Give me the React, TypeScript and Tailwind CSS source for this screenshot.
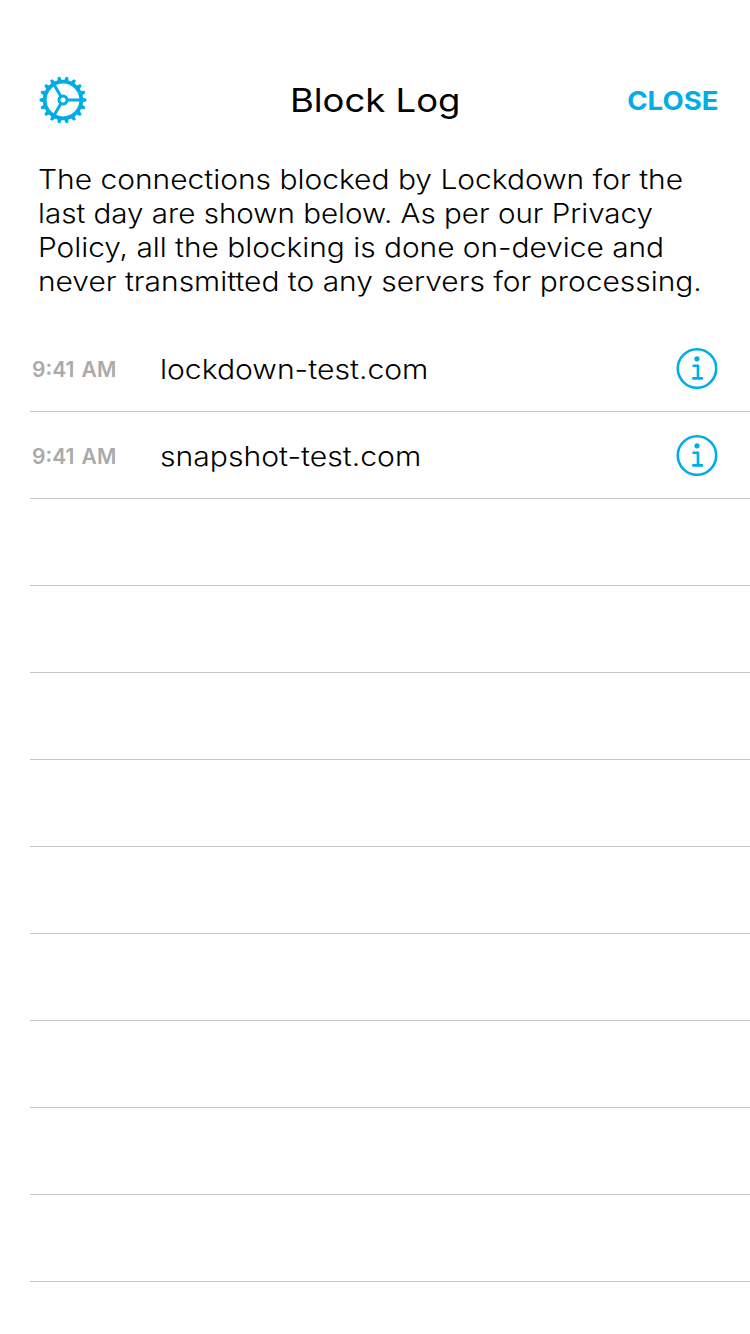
const intro = [
  { text: 'The connections blocked by Lockdown for the', stretch: 'scale-x-[1.109]' },
  { text: 'last day are shown below. As per our Privacy', stretch: 'scale-x-[1.095]' },
  { text: 'Policy, all the blocking is done on-device and', stretch: 'scale-x-[1.105]' },
  { text: 'never transmitted to any servers for processing.', stretch: 'scale-x-[1.108]' },
];

const entries = [
  { time: '9:41 AM', domain: 'lockdown-test.com' },
  { time: '9:41 AM', domain: 'snapshot-test.com' },
];

const EMPTY_ROWS = 9;
const TEETH = 18;

function GearIcon() {
  return (
    <svg viewBox="0 0 48 48" className="size-12" fill="none" stroke="currentColor">
      <circle cx="24" cy="24" r="18.3" strokeWidth="3.8" />
      <circle cx="24" cy="24" r="4" strokeWidth="3" />
      {Array.from({ length: TEETH }, (_, i) => (
        <path
          key={i}
          d="M43 21.6L47.4 22.8V25.2L43 26.4Z"
          fill="currentColor"
          stroke="none"
          transform={`rotate(${(i * 360) / TEETH} 24 24)`}
        />
      ))}
      {[0, 120, 240].map((angle) => (
        <path key={angle} d="M29 24H42" strokeWidth="3" transform={`rotate(${angle} 24 24)`} />
      ))}
    </svg>
  );
}

function InfoIcon() {
  return (
    <svg
      viewBox="0 0 42 42"
      className="size-[42px]"
      fill="none"
      stroke="currentColor"
      strokeWidth="2.6"
      strokeLinecap="round"
      strokeLinejoin="round"
    >
      <circle cx="21" cy="20.5" r="19.2" />
      <circle cx="21" cy="10.8" r="2.6" fill="currentColor" stroke="none" />
      <path d="M17.6 17.7H22V30.4M17.3 30.4H26" strokeWidth="2.6" />
    </svg>
  );
}

export default function App() {
  return (
    <main className="h-[1334px] w-[750px] overflow-hidden bg-white pt-[76px] font-['Inter',sans-serif] text-black">
      <header className="grid h-12 grid-cols-[1fr_auto_1fr] items-center pr-[32px] pl-[39px]">
        <button className="justify-self-start text-[#00ade7]" aria-label="Settings">
          <GearIcon />
        </button>
        <h1 className="mr-[7px] scale-x-[1.105] text-[33px] leading-10 font-normal">Block Log</h1>
        <button className="origin-right scale-x-[1.08] justify-self-end pt-px text-[25.5px] leading-10 font-bold text-[#00ade7]">
          CLOSE
        </button>
      </header>

      <p className="mt-[39px] pl-[37.5px] text-[27px] leading-[34px] font-light">
        {intro.map((line) => (
          <span key={line.text} className={`block w-fit origin-left whitespace-nowrap ${line.stretch}`}>
            {line.text}{' '}
          </span>
        ))}
      </p>

      <ul className="mt-[26px] pl-[30px]">
        {entries.map((entry) => (
          <li key={entry.domain} className="flex h-[87px] items-center border-b border-[#c6c6c8] pr-8 pl-[2px]">
            <div className="w-[128px] pt-[3px]">
              <span className="inline-block origin-left text-[21px] leading-[30px] font-semibold [word-spacing:2px] whitespace-nowrap text-[#aaa]">
                {entry.time}
              </span>
            </div>
            <div className="flex-1 pt-[4px]">
              <span className="block w-fit origin-left scale-x-[1.115] text-[27px] leading-[34px] font-light">
                {entry.domain}
              </span>
            </div>
            <span className="pt-px text-[#00ade7]">
              <InfoIcon />
            </span>
          </li>
        ))}
        {Array.from({ length: EMPTY_ROWS }, (_, i) => (
          <li key={i} className="h-[87px] border-b border-[#c6c6c8]" />
        ))}
      </ul>
    </main>
  );
}
